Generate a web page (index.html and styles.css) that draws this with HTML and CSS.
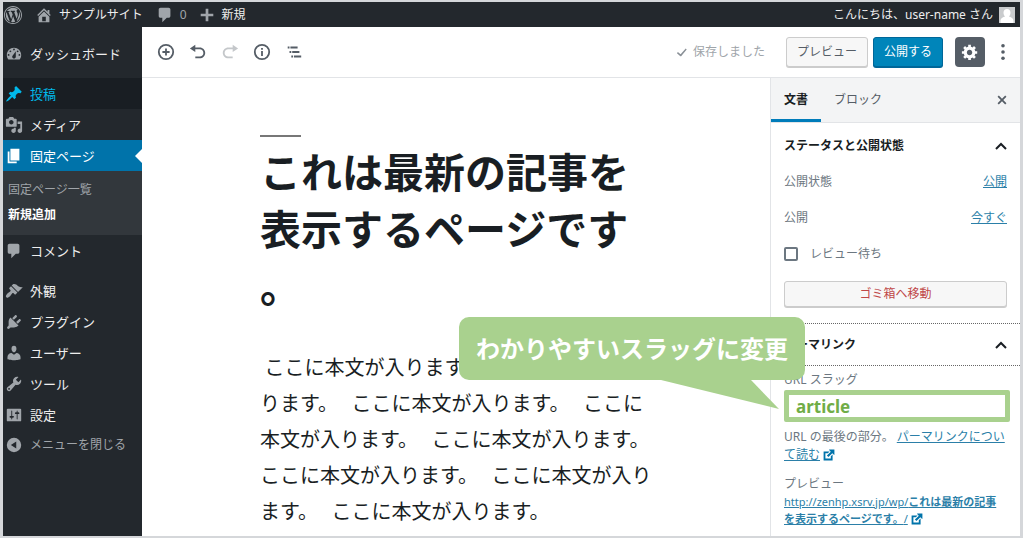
FILE: index.html
```html
<!DOCTYPE html>
<html lang="ja">
<head>
<meta charset="utf-8">
<title>固定ページの編集</title>
<link rel="stylesheet" href="styles.css">
</head>
<body>
<div class="frame">
  <header class="adminbar">
    <a href="#" class="bar-item wp-logo" aria-label="WordPress"><svg class="icon" viewBox="0 0 20 20"><path d="M20 10c0-5.52-4.48-10-10-10S0 4.48 0 10s4.48 10 10 10 10-4.48 10-10zM10 1.01c4.97 0 8.99 4.02 8.99 8.99s-4.02 8.99-8.99 8.99S1.01 14.97 1.01 10 5.03 1.01 10 1.01zM8.01 14.82L4.96 6.61c.49-.03 1.05-.08 1.05-.08.43-.05.38-1.01-.06-.99 0 0-1.29.1-2.13.1-.15 0-.33 0-.52-.01 1.44-2.17 3.9-3.6 6.7-3.6 2.09 0 3.99.79 5.41 2.09-.6-.08-1.45.35-1.45 1.42 0 .66.38 1.22.79 1.88.31.54.5 1.22.5 2.21 0 1.34-1.27 4.48-1.27 4.48l-2.71-7.5c.48-.03.75-.16.75-.16.43-.05.38-1.1-.05-1.08 0 0-1.3.11-2.14.11-.78 0-2.11-.11-2.11-.11-.43-.02-.48 1.06-.05 1.08l.84.08 1.12 3.04zm6.02 2.15L16.64 10s.67-1.69.39-3.81c.63 1.14.94 2.42.94 3.81 0 2.96-1.56 5.58-3.94 6.97zM2.68 6.77L6.5 17.25c-2.67-1.3-4.47-4.08-4.47-7.25 0-1.16.2-2.23.65-3.23zm7.45 4.53l2.29 6.25c-.75.27-1.57.42-2.42.42-.72 0-1.41-.11-2.06-.3z"/></svg></a>
    <a href="#" class="bar-item"><svg class="icon" viewBox="0 0 20 20"><path d="M16 8.5l1.53 1.53-1.06 1.06L10 4.6l-6.47 6.49-1.06-1.06L10 2.5l4 4v-2h2v4zm-6-2.46l6 5.99V18H4v-5.97zM12 17v-5H8v5h4z"/></svg>サンプルサイト</a>
    <a href="#" class="bar-item bar-count"><svg class="icon" viewBox="0 0 20 20"><path d="M5 2h9c1.1 0 2 .9 2 2v7c0 1.1-.9 2-2 2h-2l-5 5v-5H5c-1.1 0-2-.9-2-2V4c0-1.1.9-2 2-2z"/></svg>0</a>
    <a href="#" class="bar-item"><svg class="icon" viewBox="0 0 20 20"><path d="M17 8.5v3h-5.500V17h-3v-5.500H3v-3h5.500V3h3v5.500z"/></svg>新規</a>
    <a href="#" class="bar-item account">こんにちは、user-name さん<svg class="avatar" viewBox="0 0 16 16"><path fill="#c9cbcd" d="M0 0h16v16H0z"/><path fill="#fff" d="M8 2c2.200 0 3.500 1.600 3.500 3.700 0 1.700-.8 3.100-1.700 3.800 2.200.7 4.700 1.700 4.700 4.500v2h-13v-2c0-2.800 2.500-3.800 4.700-4.500-.9-.7-1.700-2.100-1.700-3.800C4.500 3.600 5.800 2 8 2z"/></svg></a>
  </header>

  <div class="workspace">
    <nav class="menu" aria-label="管理メニュー">
      <a href="#" class="menu-item"><svg class="icon" viewBox="0 0 20 20"><path d="M3.760 16h12.480c1.100-1.370 1.760-3.110 1.760-5 0-4.420-3.580-8-8-8s-8 3.580-8 8c0 1.890.66 3.630 1.760 5zM10 4c.55 0 1 .45 1 1s-.45 1-1 1-1-.45-1-1 .45-1 1-1zM6 6c.55 0 1 .45 1 1s-.45 1-1 1-1-.45-1-1 .45-1 1-1zm8 0c.55 0 1 .45 1 1s-.45 1-1 1-1-.45-1-1 .45-1 1-1zm-5.370 5.550L12 7v6c0 1.100-.9 2-2 2s-2-.9-2-2c0-.57.24-1.080.63-1.450zM4 10c.55 0 1 .45 1 1s-.45 1-1 1-1-.45-1-1 .45-1 1-1zm12 0c.55 0 1 .45 1 1s-.45 1-1 1-1-.45-1-1 .45-1 1-1z"/></svg>ダッシュボード</a>
      <div class="menu-gap"></div>
      <a href="#" class="menu-item hovered"><svg class="icon" viewBox="0 0 20 20"><path d="M10.440 3.020l1.820-1.820 6.360 6.350-1.830 1.820c-1.050-.68-2.480-.57-3.410.36l-.75.75c-.92.93-1.040 2.350-.35 3.410l-1.830 1.820-2.410-2.410-2.800 2.790c-.42.42-3.380 2.710-3.800 2.290s1.860-3.390 2.280-3.810l2.790-2.790L4.100 9.360l1.830-1.820c1.050.69 2.480.57 3.400-.36l.75-.75c.93-.92 1.050-2.350.36-3.410z"/></svg>投稿</a>
      <a href="#" class="menu-item"><svg class="icon" viewBox="0 0 20 20"><path d="M13 11V4c0-.55-.45-1-1-1h-1.670L9 1H5L3.670 3H2c-.55 0-1 .45-1 1v7c0 .55.45 1 1 1h10c.55 0 1-.45 1-1zM7 4.500c1.380 0 2.500 1.120 2.500 2.500S8.380 9.500 7 9.500 4.500 8.380 4.500 7 5.620 4.500 7 4.500zM14 6h5v10.500c0 1.380-1.120 2.500-2.500 2.500S14 17.880 14 16.500s1.120-2.500 2.500-2.500c.17 0 .34.02.5.05V9h-3V6zm-4 8.050V13h2v3.500c0 1.380-1.120 2.500-2.500 2.500S7 17.880 7 16.500 8.120 14 9.500 14c.17 0 .34.02.5.05z"/></svg>メディア</a>
      <a href="#" class="menu-item current" aria-current="true"><svg class="icon" viewBox="0 0 20 20"><path d="M6 15V2h10v13H6zm-1 1h8v2H3V5h2v11z"/></svg>固定ページ</a>
      <div class="submenu">
        <a href="#">固定ページ一覧</a>
        <a href="#" class="submenu-current" aria-current="page">新規追加</a>
      </div>
      <a href="#" class="menu-item"><svg class="icon" viewBox="0 0 20 20"><path d="M5 2h9c1.100 0 2 .9 2 2v7c0 1.100-.9 2-2 2h-2l-5 5v-5H5c-1.100 0-2-.9-2-2V4c0-1.100.9-2 2-2z"/></svg>コメント</a>
      <div class="menu-gap"></div>
      <a href="#" class="menu-item"><svg class="icon" viewBox="0 0 20 20"><path d="M14.480 11.060L7.410 3.990l1.500-1.500c.5-.56 2.300-.47 3.510.32 1.210.8 1.430 1.280 2.910 2.100 1.180.64 2.450 1.260 4.450.85zm-.71.71L6.700 4.700 4.930 6.470c-.39.39-.39 1.020 0 1.410l1.060 1.060c.39.39.39 1.030 0 1.420-.6.6-1.430 1.110-2.210 1.690-.35.26-.7.53-1.010.84C1.430 14.230.4 16.080 1.400 17.070c.99 1 2.840-.03 4.180-1.360.31-.31.58-.66.85-1.020.57-.78 1.080-1.610 1.690-2.210.39-.39 1.020-.39 1.410 0l1.060 1.060c.39.39 1.020.39 1.410 0z"/></svg>外観</a>
      <a href="#" class="menu-item"><svg class="icon" viewBox="0 0 20 20"><path d="M13.110 4.360L9.870 7.600 8 5.730l3.240-3.240c.35-.34 1.050-.2 1.560.32.52.51.66 1.210.31 1.550zm-8 1.770l.91-1.120 9.010 9.010-1.190.84c-.71.71-2.630 1.160-3.820 1.160H6.140L4.900 17.260c-.59.59-1.540.59-2.120 0-.59-.58-.59-1.530 0-2.120l1.240-1.240v-3.880c0-1.130.4-3.190 1.090-3.890zm7.260 3.970l3.240-3.240c.34-.35 1.040-.21 1.550.31.52.51.66 1.210.31 1.550l-3.240 3.250z"/></svg>プラグイン</a>
      <a href="#" class="menu-item"><svg class="icon" viewBox="0 0 20 20"><path d="M10 9.250c-2.270 0-2.730-3.440-2.730-3.440C7 4.020 7.820 2 9.970 2c2.160 0 2.980 2.020 2.710 3.810 0 0-.41 3.440-2.680 3.440zm0 2.570L12.720 10c2.390 0 4.520 2.330 4.520 4.530v2.490s-3.650 1.130-7.240 1.130c-3.650 0-7.240-1.130-7.240-1.130v-2.490c0-2.250 1.940-4.480 4.470-4.480z"/></svg>ユーザー</a>
      <a href="#" class="menu-item"><svg class="icon" viewBox="0 0 20 20"><path d="M16.680 9.770c-1.340 1.340-3.300 1.670-4.950.99l-5.410 6.520c-.99.99-2.590.99-3.580 0s-.99-2.590 0-3.570l6.520-5.420c-.68-1.650-.35-3.610.99-4.950 1.280-1.280 3.120-1.620 4.720-1.060l-2.890 2.890 2.820 2.820 2.860-2.870c.53 1.580.18 3.390-1.080 4.650zM3.810 16.210c.4.39 1.040.39 1.430 0 .4-.4.4-1.040 0-1.430-.39-.4-1.030-.4-1.430 0-.39.39-.39 1.030 0 1.430z"/></svg>ツール</a>
      <a href="#" class="menu-item"><svg class="icon" viewBox="0 0 20 20"><path d="M18 16V4c0-.55-.45-1-1-1H3c-.55 0-1 .45-1 1v12c0 .55.45 1 1 1h14c.55 0 1-.45 1-1zM8 11h1c.55 0 1 .45 1 1s-.45 1-1 1H8v1.500c0 .28-.22.5-.5.5s-.5-.22-.5-.5V13H6c-.55 0-1-.45-1-1s.45-1 1-1h1V5.500c0-.28.22-.5.5-.5s.5.22.5.5V11zm5-2h-1c-.55 0-1-.45-1-1s.45-1 1-1h1V5.500c0-.28.22-.5.5-.5s.5.22.5.5V7h1c.55 0 1 .45 1 1s-.45 1-1 1h-1v5.500c0 .28-.22.5-.5.5s-.5-.22-.5-.5V9z"/></svg>設定</a>
      <button type="button" class="menu-item collapse"><svg class="icon" viewBox="0 0 20 20"><path fill-rule="evenodd" d="M10 2a8 8 0 1 0 0 16 8 8 0 0 0 0-16zm2.500 4v8L6.500 10z"/></svg>メニューを閉じる</button>
    </nav>

    <div class="editor">
      <div class="toolbar">
        <div class="tools">
          <button type="button" aria-label="ブロックの追加"><svg class="icon line" viewBox="0 0 20 20"><circle cx="10" cy="10" r="8"/><path d="M10 6v8M6 10h8"/></svg></button>
          <button type="button" aria-label="元に戻す"><svg class="icon" viewBox="0 0 20 20"><path d="M12 5H7V2L1 6l6 4V7h5c2.200 0 4 1.800 4 4s-1.800 4-4 4H7v2h5c3.300 0 6-2.700 6-6s-2.700-6-6-6z"/></svg></button>
          <button type="button" aria-label="やり直す" disabled><svg class="icon" viewBox="0 0 20 20"><path d="M8 5h5V2l6 4-6 4V7H8c-2.200 0-4 1.800-4 4s1.800 4 4 4h5v2H8c-3.300 0-6-2.700-6-6s2.700-6 6-6z"/></svg></button>
          <button type="button" aria-label="コンテンツ構造"><svg class="icon line" viewBox="0 0 20 20"><circle cx="10" cy="10" r="8"/><path d="M10 5.500v2M10 9v5.500"/></svg></button>
          <button type="button" aria-label="ブロックナビゲーション"><svg class="icon line" viewBox="0 0 20 20"><path d="M3 5h2M6 5h8M5 10h2M8 10h8M7 15h2M10 15h8"/></svg></button>
        </div>
        <div class="actions">
          <span class="saved"><svg class="icon" viewBox="0 0 20 20"><path d="M16.500 4l1.500 1.200-8.600 10.600H8.200L3 11l1.400-1.600 4.200 3.400z"/></svg>保存しました</span>
          <button type="button" class="btn">プレビュー</button>
          <button type="button" class="btn btn-primary">公開する</button>
          <button type="button" class="btn-settings" aria-label="設定"><svg class="icon" viewBox="0 0 20 20"><path d="M18 12h-2.180c-.17.7-.44 1.350-.81 1.930l1.540 1.540-2.100 2.100-1.540-1.540c-.58.36-1.230.63-1.910.79V19H8v-2.180c-.68-.16-1.330-.43-1.910-.79l-1.540 1.540-2.120-2.120 1.540-1.540c-.36-.58-.63-1.230-.79-1.910H1V9.030h2.170c.16-.7.44-1.350.8-1.940L2.430 5.550l2.100-2.100 1.540 1.540c.58-.37 1.240-.64 1.930-.81V2h3v2.180c.68.16 1.330.43 1.910.79l1.540-1.540 2.120 2.120-1.540 1.540c.36.59.64 1.240.8 1.940H18V12zm-8.500 1.500c1.660 0 3-1.340 3-3s-1.340-3-3-3-3 1.340-3 3 1.340 3 3 3z"/></svg></button>
          <button type="button" class="btn-more" aria-label="詳細設定"><svg class="icon" viewBox="0 0 20 20"><circle cx="10" cy="3" r="2"/><circle cx="10" cy="10" r="2"/><circle cx="10" cy="17" r="2"/></svg></button>
        </div>
      </div>

      <div class="columns">
        <main class="canvas">
          <h1>これは最新の記事を<br>表示するページです<br>。</h1>
          <p>&nbsp;ここに本文が入ります。&nbsp;&nbsp;&nbsp;ここに本文が入<br>ります。&nbsp;&nbsp;&nbsp;ここに本文が入ります。&nbsp;&nbsp;&nbsp;ここに<br>本文が入ります。&nbsp;&nbsp;&nbsp;ここに本文が入ります。<br>ここに本文が入ります。&nbsp;&nbsp;&nbsp;ここに本文が入り<br>ます。&nbsp;&nbsp;&nbsp;ここに本文が入ります。</p>
        </main>

        <aside class="sidebar">
          <div class="tabs">
            <button type="button" class="tab tab-active">文書</button>
            <button type="button" class="tab">ブロック</button>
            <button type="button" class="tabs-close" aria-label="設定を閉じる"><svg class="icon" viewBox="0 0 20 20"><path d="M14.950 6.460L11.410 10l3.540 3.540-1.410 1.410L10 11.420l-3.530 3.530-1.420-1.420L8.580 10 5.050 6.470l1.420-1.420L10 8.580l3.540-3.530z"/></svg></button>
          </div>
          <section class="panel status">
            <button type="button" class="panel-title">ステータスと公開状態<svg class="icon" viewBox="0 0 12 12"><path d="M1 9l5-5 5 5"/></svg></button>
            <div class="rows">
              <div class="row"><span>公開状態</span><a href="#">公開</a></div>
              <div class="row"><span>公開</span><a href="#">今すぐ</a></div>
              <label class="row check"><input type="checkbox">レビュー待ち</label>
            </div>
            <button type="button" class="btn btn-trash">ゴミ箱へ移動</button>
          </section>
          <section class="panel permalink">
            <button type="button" class="panel-title focused">パーマリンク<svg class="icon" viewBox="0 0 12 12"><path d="M1 9l5-5 5 5"/></svg></button>
            <label for="slug">URL スラッグ</label>
            <input id="slug" type="text" value="article">
            <p>URL の最後の部分。 <a href="#">パーマリンクについて読む</a> <svg class="icon external" viewBox="0 0 20 20"><path d="M10 1h9v9l-3-2V6.500l-7 7L6.500 11l7-7H12zm3 14v-3l3-3v10H1V4h10L8 7H4v9h9z"/></svg></p>
            <h2>プレビュー</h2>
            <p class="preview-url"><a href="#">http://zenhp.xsrv.jp/wp/<b>これは最新の記事<br>を表示するページです。</b>/</a> <svg class="icon external" viewBox="0 0 20 20"><path d="M10 1h9v9l-3-2V6.500l-7 7L6.500 11l7-7H12zm3 14v-3l3-3v10H1V4h10L8 7H4v9h9z"/></svg></p>
          </section>
          <div class="callout">わかりやすいスラッグに変更<svg class="callout-tail" viewBox="0 0 118 30"><path d="M0 0h90l28 29z"/></svg></div>
        </aside>
      </div>
    </div>
  </div>
</div>
</body>
</html>
```
FILE: styles.css
```css
* { box-sizing: border-box; }

body {
  margin: 0;
  background: #fff;
  color: #191e23;
  font: 12px/18px "Noto Sans", "Noto Sans CJK JP", sans-serif;
}

button, input { font: inherit; color: inherit; }
button { border: 0; padding: 0; background: none; cursor: pointer; }
svg { display: block; flex: none; }
.icon { width: 18px; height: 18px; fill: currentColor; }
.line { fill: none; stroke: currentColor; stroke-width: 2; }

.frame {
  display: flex;
  flex-direction: column;
  min-height: calc(100vh - 3px);
  margin: 0 1px 3px 0;
  border: solid #d5d7da;
  border-width: 2px 3px 2px 3px;
}

/* Admin bar */
.adminbar {
  display: flex;
  align-items: center;
  height: 25px;
  padding: 0 5px 0 1px;
  background: #23282d;
}
.bar-item {
  display: flex;
  align-items: center;
  gap: 6px;
  margin-right: 13px;
  color: #eee;
  text-decoration: none;
}
.bar-item .icon { color: #a0a5aa; }
.bar-count { color: #a0a5aa; }
.bar-item + .bar-count { margin-right: 11px; }
.account { margin: 0 0 0 auto; }
.avatar { width: 16px; height: 16px; }

.workspace { display: flex; flex: 1; }

/* Side menu */
.menu {
  flex: 0 0 139px;
  padding-top: 11px;
  background: #23282d;
}
.menu-gap { height: 9px; }
.menu-item {
  display: flex;
  align-items: center;
  gap: 7px;
  width: 100%;
  height: 31px;
  padding-left: 2px;
  color: #eee;
  font-size: 13px;
  text-decoration: none;
}
.menu-item .icon { color: #a0a5aa; }
.hovered, .menu-item.hovered .icon { background: #191e23; color: #00b9eb; }
.current {
  position: relative;
  background: #0073aa;
  color: #fff;
}
.menu-item.current .icon { color: #fff; }
.current::after {
  content: "";
  position: absolute;
  right: 0;
  border: 7px solid transparent;
  border-right-color: #fff;
  border-left: 0;
}
.submenu {
  display: flex;
  flex-direction: column;
  gap: 7px;
  padding: 10px 5px 11px;
  background: #32373c;
}
.submenu a { color: #a0a5aa; text-decoration: none; }
.submenu .submenu-current { color: #fff; font-weight: 700; }
.collapse { height: 29px; color: #a0a5aa; font-size: 12px; }

/* Editor */
.editor {
  display: flex;
  flex: 1;
  flex-direction: column;
  min-width: 0;
}
.toolbar {
  display: flex;
  align-items: center;
  justify-content: space-between;
  height: 51px;
  padding: 0 8px 0 15px;
  border-bottom: 1px solid #e2e4e7;
  color: #555d66;
}
.tools { display: flex; gap: 14px; }
.tools button:disabled { color: #c4c7ca; }
.actions { display: flex; align-items: center; }
.saved {
  display: flex;
  align-items: center;
  gap: 5px;
  margin-right: 21px;
  color: #a0a5aa;
}
.saved .icon { width: 13px; height: 13px; color: #8a9097; }
.btn {
  height: 30px;
  padding: 0 10px;
  border: 1px solid #ccc;
  border-radius: 3px;
  background: #f7f7f7;
  box-shadow: 0 1px 0 #ccc;
  color: #555d66;
}
.btn-primary {
  margin: 0 12px 0 5px;
  border-color: #006799;
  background: #0085ba;
  box-shadow: 0 1px 0 #006799;
  color: #fff;
}
.btn-settings {
  padding: 6px;
  border-radius: 4px;
  background: #555d66;
  color: #fff;
}
.btn-more { margin-left: 9px; }

.columns { display: flex; flex: 1; }
.canvas { flex: 1; min-width: 0; padding: 57px 0 0 118px; }
.canvas::before {
  content: "";
  display: block;
  width: 41px;
  height: 2px;
  background: #777;
}
.canvas h1 {
  margin: 7px 0 0;
  font-size: 41px;
  line-height: 57px;
  white-space: nowrap;
}
.canvas p {
  margin: 34px 0 0;
  font: 20px/36px "Noto Sans CJK JP", sans-serif;
  white-space: nowrap;
}

/* Settings sidebar */
.sidebar {
  position: relative;
  flex: 0 0 250px;
  min-width: 0;
  border-left: 1px solid #e2e4e7;
  color: #6c7781;
}
.sidebar a { color: #2b7fa8; }
.tabs {
  display: flex;
  height: 45px;
  padding-right: 9px;
  border-bottom: 1px solid #e2e4e7;
  background: #f3f4f5;
}
.tab { padding: 3px 13px 0; border-bottom: 3px solid transparent; color: #555d66; }
.tab-active { border-color: #007cba; color: #191e23; font-weight: 700; }
.tabs-close { margin-left: auto; color: #555d66; }

.panel { display: flex; flex-direction: column; padding: 0 13px 16px; }
.panel-title {
  display: flex;
  align-items: center;
  justify-content: space-between;
  height: 45px;
  color: #191e23;
  font-weight: 700;
}
.panel-title .icon {
  width: 12px;
  height: 12px;
  fill: none;
  stroke: currentColor;
  stroke-width: 2;
}
.rows { display: flex; flex-direction: column; gap: 8px; }
.row {
  display: flex;
  align-items: center;
  justify-content: space-between;
  height: 28px;
}
.check { justify-content: flex-start; gap: 12px; }
.check input {
  appearance: none;
  width: 14px;
  height: 14px;
  margin: 0;
  border: 2px solid #6c7781;
  border-radius: 2px;
}
.btn-trash { height: 26px; margin-top: 13px; color: #c04848; }

.permalink { padding: 0 13px 8px; }
.focused {
  height: 43px;
  margin: 0 -13px 5px;
  padding: 0 13px;
  border: dotted #666;
  border-width: 1px 0;
}
.permalink input {
  min-width: 0;
  height: 32px;
  margin: 1px -3px 6px 0;
  padding: 0 7px;
  border: 5px solid #a9d18e;
  border-radius: 2px;
  background: #fff;
  color: #70ad47;
  font-size: 17px;
  font-weight: 700;
}
.permalink p { margin: 0; }
.permalink h2 { margin: 11px 0 0; font-size: 12px; font-weight: 400; }
.permalink .preview-url { font-size: 11px; line-height: 17px; }
.external {
  display: inline-block;
  width: 12px;
  height: 12px;
  color: #0073aa;
  vertical-align: -2px;
}

/* Annotation bubble lying over the canvas and the sidebar */
.callout {
  position: absolute;
  top: 239px;
  right: 215px;
  padding: 14px 17px;
  border-radius: 10px;
  background: #a9d18e;
  color: #fff;
  font-size: 24px;
  font-weight: 700;
  line-height: 35px;
  white-space: nowrap;
}
.callout-tail {
  position: absolute;
  top: 100%;
  right: 26px;
  width: 118px;
  height: 30px;
  fill: #a9d18e;
}
```
